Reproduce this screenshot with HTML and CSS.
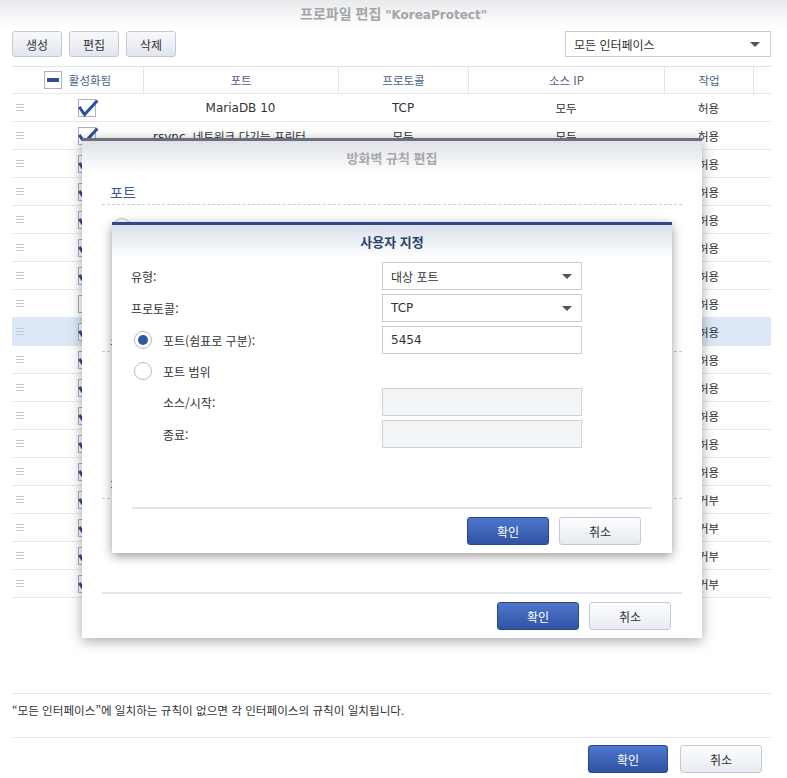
FILE: index.html
```html
<!DOCTYPE html>
<html lang="ko">
<head>
  <meta charset="UTF-8">
  <title>프로파일 편집 "KoreaProtect"</title>
  <link rel="stylesheet" href="styles.css">
</head>
<body>

<div class="page">
  <div class="titlebar">프로파일 편집 <span class="en">"KoreaProtect"</span></div>

  <div class="toolbar">
    <button class="btn tool">생성</button>
    <button class="btn tool">편집</button>
    <button class="btn tool">삭제</button>
    <div class="field iface">모든 인터페이스 <i class="caret"></i></div>
  </div>

  <div class="grid">
    <div class="row head">
      <div class="cell first">
        <svg width="18" height="18" viewBox="0 0 18 18"><rect x="0.5" y="0.5" width="17" height="17" fill="#fff" stroke="#a9b2c0"/><rect x="3" y="7" width="12" height="4" fill="#2c4f9f"/></svg>
        활성화됨
      </div>
      <div class="cell">포트</div>
      <div class="cell">프로토콜</div>
      <div class="cell">소스 IP</div>
      <div class="cell">작업</div>
      <div class="cell"></div>
    </div>

    <div class="row">
      <div class="cell handle"><i></i></div>
      <div class="cell check"><svg class="cb" width="22" height="20" viewBox="0 0 22 20"><rect x="0.5" y="1.5" width="17" height="17" fill="#fff" stroke="#a9b2c0"/><path d="M1.2 8.8 L6.6 16.6 L19.4 2.4" fill="none" stroke="#2c4f9f" stroke-width="3"/></svg></div>
      <div class="cell en">MariaDB 10</div>
      <div class="cell en">TCP</div>
      <div class="cell">모두</div>
      <div class="cell">허용</div>
      <div class="cell"></div>
    </div>
    <div class="row">
      <div class="cell handle"><i></i></div>
      <div class="cell check"><svg class="cb" width="22" height="20" viewBox="0 0 22 20"><rect x="0.5" y="1.5" width="17" height="17" fill="#fff" stroke="#a9b2c0"/><path d="M1.2 8.8 L6.6 16.6 L19.4 2.4" fill="none" stroke="#2c4f9f" stroke-width="3"/></svg></div>
      <div class="cell long"><span class="en">rsync</span>, 네트워크 다기능 프린터 외 2개</div>
      <div class="cell">모두</div>
      <div class="cell">모두</div>
      <div class="cell">허용</div>
      <div class="cell"></div>
    </div>
    <div class="row">
      <div class="cell handle"><i></i></div>
      <div class="cell check"><svg class="cb" width="22" height="20" viewBox="0 0 22 20"><rect x="0.5" y="1.5" width="17" height="17" fill="#fff" stroke="#a9b2c0"/><path d="M1.2 8.8 L6.6 16.6 L19.4 2.4" fill="none" stroke="#2c4f9f" stroke-width="3"/></svg></div>
      <div class="cell">웹 스테이션</div>
      <div class="cell en">TCP</div>
      <div class="cell">모두</div>
      <div class="cell">허용</div>
      <div class="cell"></div>
    </div>
    <div class="row">
      <div class="cell handle"><i></i></div>
      <div class="cell check"><svg class="cb" width="22" height="20" viewBox="0 0 22 20"><rect x="0.5" y="1.5" width="17" height="17" fill="#fff" stroke="#a9b2c0"/><path d="M1.2 8.8 L6.6 16.6 L19.4 2.4" fill="none" stroke="#2c4f9f" stroke-width="3"/></svg></div>
      <div class="cell en">Synology Drive Server</div>
      <div class="cell en">TCP</div>
      <div class="cell">모두</div>
      <div class="cell">허용</div>
      <div class="cell"></div>
    </div>
    <div class="row">
      <div class="cell handle"><i></i></div>
      <div class="cell check"><svg class="cb" width="22" height="20" viewBox="0 0 22 20"><rect x="0.5" y="1.5" width="17" height="17" fill="#fff" stroke="#a9b2c0"/><path d="M1.2 8.8 L6.6 16.6 L19.4 2.4" fill="none" stroke="#2c4f9f" stroke-width="3"/></svg></div>
      <div class="cell">관리 UI</div>
      <div class="cell en">TCP</div>
      <div class="cell">모두</div>
      <div class="cell">허용</div>
      <div class="cell"></div>
    </div>
    <div class="row">
      <div class="cell handle"><i></i></div>
      <div class="cell check"><svg class="cb" width="22" height="20" viewBox="0 0 22 20"><rect x="0.5" y="1.5" width="17" height="17" fill="#fff" stroke="#a9b2c0"/><path d="M1.2 8.8 L6.6 16.6 L19.4 2.4" fill="none" stroke="#2c4f9f" stroke-width="3"/></svg></div>
      <div class="cell en">SSH</div>
      <div class="cell en">TCP</div>
      <div class="cell">모두</div>
      <div class="cell">허용</div>
      <div class="cell"></div>
    </div>
    <div class="row">
      <div class="cell handle"><i></i></div>
      <div class="cell check"><svg class="cb" width="22" height="20" viewBox="0 0 22 20"><rect x="0.5" y="1.5" width="17" height="17" fill="#fff" stroke="#a9b2c0"/><path d="M1.2 8.8 L6.6 16.6 L19.4 2.4" fill="none" stroke="#2c4f9f" stroke-width="3"/></svg></div>
      <div class="cell">파일 서버</div>
      <div class="cell">모두</div>
      <div class="cell">모두</div>
      <div class="cell">허용</div>
      <div class="cell"></div>
    </div>
    <div class="row">
      <div class="cell handle"><i></i></div>
      <div class="cell check"><svg class="cb" width="22" height="20" viewBox="0 0 22 20"><rect x="0.5" y="1.5" width="17" height="17" fill="#fff" stroke="#a9b2c0"/></svg></div>
      <div class="cell en">5454</div>
      <div class="cell en">TCP</div>
      <div class="cell">모두</div>
      <div class="cell">허용</div>
      <div class="cell"></div>
    </div>
    <div class="row sel">
      <div class="cell handle"><i></i></div>
      <div class="cell check"><svg class="cb" width="22" height="20" viewBox="0 0 22 20"><rect x="0.5" y="1.5" width="17" height="17" fill="#fff" stroke="#a9b2c0"/><path d="M1.2 8.8 L6.6 16.6 L19.4 2.4" fill="none" stroke="#2c4f9f" stroke-width="3"/></svg></div>
      <div class="cell en">Surveillance Station</div>
      <div class="cell en">TCP</div>
      <div class="cell">모두</div>
      <div class="cell">허용</div>
      <div class="cell"></div>
    </div>
    <div class="row">
      <div class="cell handle"><i></i></div>
      <div class="cell check"><svg class="cb" width="22" height="20" viewBox="0 0 22 20"><rect x="0.5" y="1.5" width="17" height="17" fill="#fff" stroke="#a9b2c0"/><path d="M1.2 8.8 L6.6 16.6 L19.4 2.4" fill="none" stroke="#2c4f9f" stroke-width="3"/></svg></div>
      <div class="cell en">3306</div>
      <div class="cell en">TCP</div>
      <div class="cell">모두</div>
      <div class="cell">허용</div>
      <div class="cell"></div>
    </div>
    <div class="row">
      <div class="cell handle"><i></i></div>
      <div class="cell check"><svg class="cb" width="22" height="20" viewBox="0 0 22 20"><rect x="0.5" y="1.5" width="17" height="17" fill="#fff" stroke="#a9b2c0"/><path d="M1.2 8.8 L6.6 16.6 L19.4 2.4" fill="none" stroke="#2c4f9f" stroke-width="3"/></svg></div>
      <div class="cell en">8080</div>
      <div class="cell en">TCP</div>
      <div class="cell">모두</div>
      <div class="cell">허용</div>
      <div class="cell"></div>
    </div>
    <div class="row">
      <div class="cell handle"><i></i></div>
      <div class="cell check"><svg class="cb" width="22" height="20" viewBox="0 0 22 20"><rect x="0.5" y="1.5" width="17" height="17" fill="#fff" stroke="#a9b2c0"/><path d="M1.2 8.8 L6.6 16.6 L19.4 2.4" fill="none" stroke="#2c4f9f" stroke-width="3"/></svg></div>
      <div class="cell en">443</div>
      <div class="cell en">TCP</div>
      <div class="cell">모두</div>
      <div class="cell">허용</div>
      <div class="cell"></div>
    </div>
    <div class="row">
      <div class="cell handle"><i></i></div>
      <div class="cell check"><svg class="cb" width="22" height="20" viewBox="0 0 22 20"><rect x="0.5" y="1.5" width="17" height="17" fill="#fff" stroke="#a9b2c0"/><path d="M1.2 8.8 L6.6 16.6 L19.4 2.4" fill="none" stroke="#2c4f9f" stroke-width="3"/></svg></div>
      <div class="cell en">80</div>
      <div class="cell en">TCP</div>
      <div class="cell">모두</div>
      <div class="cell">허용</div>
      <div class="cell"></div>
    </div>
    <div class="row">
      <div class="cell handle"><i></i></div>
      <div class="cell check"><svg class="cb" width="22" height="20" viewBox="0 0 22 20"><rect x="0.5" y="1.5" width="17" height="17" fill="#fff" stroke="#a9b2c0"/><path d="M1.2 8.8 L6.6 16.6 L19.4 2.4" fill="none" stroke="#2c4f9f" stroke-width="3"/></svg></div>
      <div class="cell en">5000</div>
      <div class="cell en">TCP</div>
      <div class="cell">모두</div>
      <div class="cell">허용</div>
      <div class="cell"></div>
    </div>
    <div class="row">
      <div class="cell handle"><i></i></div>
      <div class="cell check"><svg class="cb" width="22" height="20" viewBox="0 0 22 20"><rect x="0.5" y="1.5" width="17" height="17" fill="#fff" stroke="#a9b2c0"/><path d="M1.2 8.8 L6.6 16.6 L19.4 2.4" fill="none" stroke="#2c4f9f" stroke-width="3"/></svg></div>
      <div class="cell">모두</div>
      <div class="cell">모두</div>
      <div class="cell">중국</div>
      <div class="cell">거부</div>
      <div class="cell"></div>
    </div>
    <div class="row">
      <div class="cell handle"><i></i></div>
      <div class="cell check"><svg class="cb" width="22" height="20" viewBox="0 0 22 20"><rect x="0.5" y="1.5" width="17" height="17" fill="#fff" stroke="#a9b2c0"/><path d="M1.2 8.8 L6.6 16.6 L19.4 2.4" fill="none" stroke="#2c4f9f" stroke-width="3"/></svg></div>
      <div class="cell">모두</div>
      <div class="cell">모두</div>
      <div class="cell">러시아</div>
      <div class="cell">거부</div>
      <div class="cell"></div>
    </div>
    <div class="row">
      <div class="cell handle"><i></i></div>
      <div class="cell check"><svg class="cb" width="22" height="20" viewBox="0 0 22 20"><rect x="0.5" y="1.5" width="17" height="17" fill="#fff" stroke="#a9b2c0"/><path d="M1.2 8.8 L6.6 16.6 L19.4 2.4" fill="none" stroke="#2c4f9f" stroke-width="3"/></svg></div>
      <div class="cell">모두</div>
      <div class="cell">모두</div>
      <div class="cell">북한</div>
      <div class="cell">거부</div>
      <div class="cell"></div>
    </div>
    <div class="row">
      <div class="cell handle"><i></i></div>
      <div class="cell check"><svg class="cb" width="22" height="20" viewBox="0 0 22 20"><rect x="0.5" y="1.5" width="17" height="17" fill="#fff" stroke="#a9b2c0"/><path d="M1.2 8.8 L6.6 16.6 L19.4 2.4" fill="none" stroke="#2c4f9f" stroke-width="3"/></svg></div>
      <div class="cell">모두</div>
      <div class="cell">모두</div>
      <div class="cell">모두</div>
      <div class="cell">거부</div>
      <div class="cell"></div>
    </div>
  </div>

  <div class="spacer"></div>

  <div class="note">“모든 인터페이스”에 일치하는 규칙이 없으면 각 인터페이스의 규칙이 일치됩니다.</div>

  <div class="foot">
    <button class="btn primary ok">확인</button>
    <button class="btn cancel">취소</button>
  </div>
</div>

<!-- 방화벽 규칙 편집 -->
<div class="dialog rule">
  <div class="dlg-head">방화벽 규칙 편집</div>
  <div class="dlg-body">
    <div class="section">
      <div class="sec-title">포트</div>
      <div class="opt"><span class="radio"></span>모두</div>
      <div class="opt"><span class="radio on"></span>사용자 지정</div>
      <div class="opt"><span class="radio"></span>내장 애플리케이션 목록에서 선택</div>
    </div>
    <div class="section">
      <div class="sec-title">소스 <span class="en">IP</span></div>
      <div class="opt"><span class="radio on"></span>모두</div>
      <div class="opt"><span class="radio"></span>특정 <span class="en">IP</span></div>
      <div class="opt"><span class="radio"></span>위치</div>
    </div>
    <div class="section">
      <div class="sec-title">작업</div>
      <div class="opt"><span class="radio on"></span>허용</div>
    </div>
  </div>
  <div class="dlg-foot">
    <button class="btn primary wide">확인</button>
    <button class="btn wide">취소</button>
  </div>
</div>

<!-- 사용자 지정 -->
<div class="dialog custom">
  <div class="dlg-head">사용자 지정</div>
  <div class="form">
    <div class="frow">
      <div class="flabel">유형:</div>
      <div class="field">대상 포트 <i class="caret"></i></div>
    </div>
    <div class="frow">
      <div class="flabel">프로토콜:</div>
      <div class="field"><span class="en">TCP</span> <i class="caret"></i></div>
    </div>
    <div class="frow">
      <div class="flabel"><span class="radio on"></span>포트(쉼표로 구분):</div>
      <div class="field"><span class="en">5454</span></div>
    </div>
    <div class="frow short">
      <div class="flabel"><span class="radio"></span>포트 범위</div>
    </div>
    <div class="frow">
      <div class="flabel ind">소스/시작:</div>
      <div class="field off"></div>
    </div>
    <div class="frow">
      <div class="flabel ind">종료:</div>
      <div class="field off"></div>
    </div>
  </div>
  <div class="dlg-foot">
    <button class="btn primary wide">확인</button>
    <button class="btn wide">취소</button>
  </div>
</div>

</body>
</html>
```

FILE: styles.css
```css
* {
  box-sizing: border-box;
}

body {
  margin: 0;
  width: 787px;
  height: 778px;
  position: relative;
  overflow: hidden;
  background: #fff;
  color: #333;
  font-family: "Noto Sans CJK KR", sans-serif;
  font-size: 12px;
}

.en {
  font-family: "DejaVu Sans", "Noto Sans CJK KR", sans-serif;
  font-size: 12px;
}

.page {
  height: 778px;
  display: flex;
  flex-direction: column;
}

.titlebar {
  height: 28px;
  line-height: 27px;
  text-align: center;
  font-weight: bold;
  font-size: 14px;
  color: #a4a4a4;
  background: linear-gradient(#e8eaed, #fff);
}

/* buttons */
.btn {
  font: inherit;
  height: 28px;
  padding: 0;
  border: 1px solid #c3cad6;
  border-radius: 3px;
  background: linear-gradient(#fcfdfe, #e7ebf1);
  color: #333;
}

.btn.primary {
  background: linear-gradient(#4d77cd, #3152a4);
  border-color: #2a4891;
  color: #fff;
}

.btn.wide {
  width: 82px;
}

.toolbar {
  display: flex;
  gap: 7px;
  height: 26px;
  margin-top: 3px;
  padding: 0 16px 0 12px;
}

.btn.tool {
  width: 50px;
  height: 26px;
  background: linear-gradient(#f8f9fb, #e2e6ed);
}

/* select / input boxes */
.field {
  width: 200px;
  height: 28px;
  padding: 0 9px 0 8px;
  border: 1px solid #c6cdd8;
  background: #fff;
  display: flex;
  align-items: center;
  justify-content: space-between;
}

.field.off {
  background: #f4f5f7;
  border-color: #cdd2da;
}

.field.iface {
  margin-left: auto;
  width: 206px;
  height: 26px;
  padding-right: 10px;
}

.caret {
  width: 0;
  height: 0;
  border-left: 5px solid transparent;
  border-right: 5px solid transparent;
  border-top: 5px solid #4d5560;
}

/* grid */
.grid {
  margin: 9px 16px 0 12px;
}

.row {
  display: grid;
  grid-template-columns: 30px 101px 195px 130px 196px 89px 1fr;
  align-items: center;
  height: 28px;
  border-bottom: 1px solid #e4e7eb;
  font-size: 11.5px;
}

.row.sel {
  background: #dce7f7;
}

.cell {
  padding: 0 10px;
  text-align: center;
  white-space: nowrap;
  overflow: hidden;
  text-overflow: ellipsis;
}

.cell.long {
  font-family: "DejaVu Sans", "Noto Sans CJK KR", sans-serif;
}

.row.head {
  border-top: 1px solid #dfe3e8;
  color: #4b6089;
}

.head .cell {
  height: 100%;
  display: flex;
  align-items: center;
  justify-content: center;
  border-left: 1px solid #dfe5ee;
}

.head .cell.first {
  grid-column: span 2;
  border-left: 0;
  gap: 7px;
  padding: 0;
}

.cell.handle {
  padding: 0 0 0 4px;
}

.handle i {
  display: block;
  width: 8px;
  height: 7px;
  background: linear-gradient(#c3c8cf 0 1px, transparent 1px 3px, #c3c8cf 3px 4px, transparent 4px 6px, #c3c8cf 6px 7px);
}

.cell.check {
  padding: 0 0 0 36px;
  text-align: left;
  height: 20px;
}

.cb {
  display: block;
}

.spacer {
  flex: 1;
}

.note {
  margin: 0 16px 0 12px;
  height: 45px;
  line-height: 33px;
  border-top: 1px solid #e3e6ea;
  border-bottom: 1px solid #e3e6ea;
  font-size: 11.6px;
}

.foot {
  height: 40px;
  padding: 7px 25px 0 0;
  display: flex;
  justify-content: flex-end;
  gap: 12px;
}

.foot .ok {
  width: 80px;
}

.foot .cancel {
  width: 82px;
}

/* dialogs */
.dialog {
  position: absolute;
  background: #fff;
  display: flex;
  flex-direction: column;
}

.rule {
  left: 82px;
  top: 138px;
  width: 620px;
  height: 500px;
  border-top: 3px solid #6b7079;
  box-shadow: 0 3px 12px rgba(0, 0, 0, 0.35);
}

.custom {
  left: 112px;
  top: 222px;
  width: 560px;
  height: 331px;
  border-top: 3px solid #2e4a88;
  box-shadow: 0 3px 10px rgba(0, 0, 0, 0.4);
}

.dlg-head {
  flex: none;
  height: 33px;
  line-height: 33px;
  text-align: center;
  font-weight: bold;
  font-size: 13px;
}

.rule .dlg-head {
  color: #a9a9a9;
  background: linear-gradient(#dfe2e8, #fff);
}

.custom .dlg-head {
  color: #2d3f6b;
  background: linear-gradient(#d9e0ec, #fff);
}

.dlg-body {
  flex: 1;
  min-height: 0;
  overflow: hidden;
  padding: 0 20px;
}

.section {
  height: 147px;
}

.sec-title {
  height: 31px;
  line-height: 36px;
  padding-left: 8px;
  border-bottom: 1px dashed #c6ccd6;
  color: #3a5795;
  font-size: 14px;
}

.sec-title .en {
  font-size: 13px;
}

.opt {
  display: flex;
  align-items: center;
  gap: 11px;
  height: 18px;
  margin: 13px 0 0 11px;
}

.radio {
  flex: none;
  width: 18px;
  height: 18px;
  border: 1px solid #b4bdcb;
  border-radius: 50%;
  background: #fff;
  display: flex;
  align-items: center;
  justify-content: center;
}

.radio.on::after {
  content: "";
  width: 10px;
  height: 10px;
  border-radius: 50%;
  background: #2f55a5;
}

.form {
  padding: 4px 0 0 19px;
}

.frow {
  display: flex;
  align-items: center;
  height: 28px;
  margin-bottom: 4px;
}

.frow.short {
  height: 26px;
}

.flabel {
  width: 251px;
  display: flex;
  align-items: center;
  gap: 11px;
}

.flabel .radio {
  margin-left: 3px;
}

.flabel.ind {
  padding-left: 32px;
}

.dlg-foot {
  flex: none;
  margin: auto 20px 0;
  padding: 8px 11px;
  border-top: 2px solid #e1e4e9;
  display: flex;
  justify-content: flex-end;
  gap: 10px;
}
```
